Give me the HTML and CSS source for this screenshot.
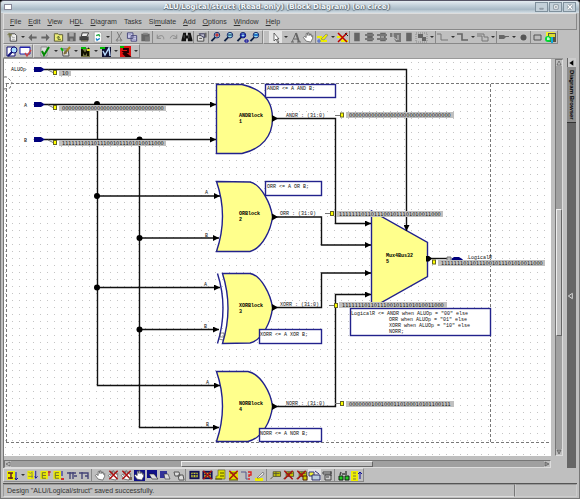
FILE: index.html
```
<!DOCTYPE html>
<html lang="en">
<head>
  <meta charset="UTF-8" />
  <title>ALU/Logical/struct</title>
  <link rel="stylesheet" href="styles.css">
</head>
<body>
  <div class="window">
    <header class="titlebar">
      <span class="app-icon"></span>
      <h1>ALU/Logical/struct (Read-only) (Block Diagram) (on circe)</h1>
      <div class="window-buttons">
        <button aria-label="Minimize"><svg viewBox="0 0 12 9"><path d="M4 6h4v1H4z" fill="#fff" stroke="#7d8b96"/></svg></button>
        <button aria-label="Maximize"><svg viewBox="0 0 12 9"><path d="M4 2h5v5H4zM6 4h1v1H6z" fill="#fff" stroke="#7d8b96"/></svg></button>
        <button aria-label="Close"><svg viewBox="0 0 12 9"><path d="M4 2l5 5M9 2l-5 5" stroke="#7d8b96" stroke-width="3"/><path d="M4 2l5 5M9 2l-5 5" stroke="#fff" stroke-width="1.4"/></svg></button>
      </div>
    </header>

    <nav class="menubar">
      <button><u>F</u>ile</button>
      <button><u>E</u>dit</button>
      <button><u>V</u>iew</button>
      <button>H<u>D</u>L</button>
      <button><u>D</u>iagram</button>
      <button>Tasks</button>
      <button>Si<u>m</u>ulate</button>
      <button><u>A</u>dd</button>
      <button><u>O</u>ptions</button>
      <button><u>W</u>indow</button>
      <button><u>H</u>elp</button>
    </nav>

    <div class="toolbar-row">
      <div class="toolbar standard">
        <button aria-label="New"><svg><use href="#new"/></svg></button>
        <button class="drop" aria-label="New options"></button>
        <button aria-label="Back"><svg><use href="#back"/></svg></button>
        <button aria-label="Forward"><svg><use href="#forward"/></svg></button>
        <button aria-label="Open"><svg><use href="#folder"/></svg></button>
        <button aria-label="Save"><svg><use href="#save"/></svg></button>
        <button aria-label="Print"><svg><use href="#print"/></svg></button>
        <button aria-label="Refresh"><svg><use href="#refresh"/></svg></button>
        <button class="drop" aria-label="Refresh options"></button>
        <span class="sep"></span>
        <button aria-label="Cut"><svg><use href="#cut"/></svg></button>
        <button aria-label="Copy"><svg><use href="#copy"/></svg></button>
        <button aria-label="Paste"><svg><use href="#paste"/></svg></button>
        <span class="sep"></span>
        <button aria-label="Undo"><svg><use href="#undo"/></svg></button>
        <button aria-label="Redo"><svg><use href="#redo"/></svg></button>
        <button aria-label="Find"><svg><use href="#find"/></svg></button>
        <span class="sep"></span>
        <button aria-label="Properties"><svg><use href="#props"/></svg></button>
        <span class="sep"></span>
        <button aria-label="Zoom in"><svg><use href="#lens"/><path d="M5 4h4M7 2v4" stroke="#c00"/></svg></button>
        <button aria-label="Zoom out"><svg><use href="#lens"/><path d="M5 4h4" stroke="#024"/></svg></button>
        <button aria-label="Zoom area"><svg><use href="#lens"/><path d="M5 3h4v3H5zM9 9h3v2H9z" fill="none" stroke="#009"/></svg></button>
        <button aria-label="Zoom to fit"><svg><use href="#lens"/><path d="M5 3h4v2H5z" fill="#27c"/></svg></button>
      </div>
      <div class="toolbar drawing">
        <button class="on" aria-label="Select"><svg><path d="M5 2v8l2-2 2 4 1-1-2-3h2z" fill="#fff" stroke="#333" stroke-width=".7"/></svg></button>
        <button class="drop" aria-label="Select options"></button>
        <button aria-label="Text"><svg><path d="M2 11h3M8 11h4M3 11l4-9 3 9M5 8h4" fill="none" stroke="#666"/><path d="M7 2l3 9" stroke="#666" stroke-width="2"/></svg></button>
        <button aria-label="Pan"><svg><use href="#hand"/></svg></button>
        <span class="sep"></span>
        <button aria-label="Add signal"><svg><path d="M1 6h4v4h6" fill="none" stroke="#ee0" stroke-width="2"/><path d="M5 8l5-5 2 1-4 5z" fill="#ee0" stroke="#777" stroke-width=".6"/><path d="M3 8v4M1 10h4" stroke="#46c"/></svg></button>
        <button class="drop" aria-label="Signal options"></button>
        <button aria-label="Delete signal"><svg><path d="M1 6h5v4h6" fill="none" stroke="#ee0" stroke-width="2"/><path d="M2 2l9 9M11 2l-9 9" stroke="#b00" stroke-width="1.5"/><path d="M9 2l3 3" stroke="#222"/></svg></button>
        <span class="sep"></span>
        <button aria-label="Block"><svg><use href="#block"/></svg></button>
        <button aria-label="Component"><svg><use href="#block"/><path d="M2 4h9M2 8h9" stroke="#777" stroke-width="2"/></svg></button>
        <button aria-label="Embedded block"><svg><use href="#block"/><path d="M1 4h10M1 8h10" stroke="#777" stroke-width="2"/><path d="M5 6h3" stroke="#ccc"/></svg></button>
        <button aria-label="Port map"><svg><path d="M1 2h11v9H7l-3-5H1z" fill="#777"/><path d="M4 2v4l4 3M9 4v5" fill="none" stroke="#ccc"/></svg></button>
        <button aria-label="Frame"><svg><use href="#block"/></svg></button>
        <button aria-label="Group"><svg><path d="M1 2h11v9H1z" fill="none" stroke="#888" stroke-dasharray="1 1"/><path d="M3 3h5v4H3zM7 6h4v4H7z" fill="#666"/></svg></button>
        <button class="drop" aria-label="Group options"></button>
        <span class="sep"></span>
        <button aria-label="Add wire"><svg><path d="M1 3h4v6h7" fill="none" stroke="#777"/></svg></button>
        <button class="drop" aria-label="Wire options"></button>
        <button aria-label="Add bus"><svg><path d="M1 3h5v6h6" fill="none" stroke="#666" stroke-width="1.6"/></svg></button>
        <button class="drop" aria-label="Bus options"></button>
        <button aria-label="Add bundle"><svg><path d="M1 3h7v3M1 5h5v5h6M8 6h4v4" fill="none" stroke="#777"/></svg></button>
        <button class="drop" aria-label="Bundle options"></button>
        <span class="sep"></span>
        <button aria-label="Add port"><svg><path d="M2 4h5l2 2-2 2H2zM8 5h4v1H8z" fill="#666"/></svg></button>
        <button class="drop" aria-label="Port options"></button>
        <button aria-label="Junction"><svg><circle cx="6.500" cy="6.500" r="3" fill="#555"/></svg></button>
        <span class="sep"></span>
        <button aria-label="Panel"><svg><path d="M3 4h7v5H3z" fill="#bbb" stroke="#555"/></svg></button>
        <button aria-label="Colours"><svg><path d="M2 1h9v4H2z" fill="#ee3"/><path d="M4 2h8v9H4z" fill="#554"/><path d="M5 3h6v3H5z" fill="#dd3"/><circle cx="4" cy="8" r="3" fill="#0d3"/><path d="M4 6v3M3 8h3" stroke="#fff"/><path d="M7 6h2v6H7z" fill="#1ad"/></svg></button>
      </div>
    </div>

    <div class="toolbar-row">
      <div class="toolbar">
        <button aria-label="View design"><svg><path d="M1 2h8v9H1z" fill="#fff" stroke="#117"/><circle cx="8" cy="5" r="3" fill="#adf" stroke="#117"/><path d="M6 7l-4 4" stroke="#117" stroke-width="2"/></svg></button>
        <button aria-label="Edit comment"><svg><path d="M1 2h10v7H1z" fill="#fff" stroke="#22a"/><path d="M1 2h10v1H1z" fill="#22a"/><path d="M6 8l2 3 4-6" fill="none" stroke="#c44" stroke-width="1.4"/></svg></button>
      </div>
      <div class="toolbar">
        <button aria-label="Check"><svg><path d="M2 2h6v9H2z" fill="#ddd" stroke="#666" stroke-width=".6"/><path d="M3 6l2 4 5-8" fill="none" stroke="#080" stroke-width="2"/></svg></button>
        <button class="drop" aria-label="Check options"></button>
        <button aria-label="Generate"><svg><path d="M3 4h6l1 7H4z" fill="#ddd" stroke="#555"/><path d="M5 9l6-7" stroke="#a82" stroke-width="2"/><path d="M2 3l2 3" stroke="#0b0" stroke-width="2"/><path d="M5 6h3M5 8h3" stroke="#555"/></svg></button>
        <button class="drop" aria-label="Generate options"></button>
        <button aria-label="Compile"><svg><path d="M2 3h9v9H2z" fill="#774"/><path d="M3 11V5l3 4 3-4v6" fill="none" stroke="#110" stroke-width="2"/><path d="M2 2h5v2H2z" fill="#0b0"/><path d="M8 4h3v2H8z" fill="#dd2"/></svg></button>
        <button class="drop" aria-label="Compile options"></button>
        <button aria-label="Simulate"><svg><path d="M3 2h9v10H3z" fill="#113"/><path d="M4 6l2 4 4-7 1 8" fill="none" stroke="#bdf" stroke-width="1.4"/><path d="M1 2h5v2H1z" fill="#0b0"/></svg></button>
        <button class="drop" aria-label="Simulate options"></button>
        <button aria-label="Synthesize"><svg><path d="M1 1h11v11H1z" fill="#d11"/><path d="M4 4h5v3H5l5 4H7L4 8" fill="none" stroke="#200" stroke-width="1.8"/><path d="M1 1h4v2H1z" fill="#0b0"/></svg></button>
        <button class="drop" aria-label="Synthesize options"></button>
      </div>
    </div>

    <main class="workspace">
      <div class="editor">
        <div class="canvas">
          <svg class="diagram" width="548" height="396" viewBox="4 59 548 396">
            <defs>
              <pattern id="dots" x="5" y="62" width="7" height="7" patternUnits="userSpaceOnUse">
                <rect width="1" height="1" fill="#c4c4c4"/>
              </pattern>
              <marker id="arrow" viewBox="0 0 6 6" markerWidth="6" markerHeight="6" refX="6" refY="3" orient="auto" markerUnits="userSpaceOnUse">
                <path d="M0 0L6 3 0 6z"/>
              </marker>
            </defs>
            <rect x="4" y="59" width="548" height="396" fill="url(#dots)"/>

            <!-- page boundary -->
            <g class="boundary">
              <path d="M6.500 84V442M6 83.500H552M6 442.500H552M490.500 84V442"/>
              <path d="M4 77h3l5 5M4 89l6-1 2-6"/>
            </g>

            <!-- gates -->
            <g class="shape">
              <path d="M216.500 84.500H242C262 89 272.500 101 272.500 118.500S262 149 242 153.500H216.500z"/>
              <path d="M216.500 181.500L250 182C261 184 271 204 272.500 217C271 229 263 248 250 251.500H216.500Q228.500 216 216.500 181.500z"/>
              <path d="M222.500 273.500H250C261 275 271 295 272.500 308C271 321 263 340 250 343L222.500 343.500Q233.500 308 222.500 273.500z"/>
              <path d="M217.500 273.500Q228.500 308 217.500 343.500" fill="none"/>
              <path d="M216.500 371.500H248C261 374 271 393 272.500 406.500C271 420 263 438 248 441.500H216.500Q228.500 406 216.500 371.500z"/>
              <path d="M371.500 211V308L427.500 276.500V242.500z"/>
            </g>

            <!-- wires -->
            <g class="wire">
              <path d="M44 69.500H406.500V231" marker-end="url(#arrow)"/>
              <path d="M44 104.500H216" marker-end="url(#arrow)"/>
              <path d="M44 139.500H216" marker-end="url(#arrow)"/>
              <path d="M97.500 104V385.500H220" marker-end="url(#arrow)"/>
              <path d="M97.500 196H220" marker-end="url(#arrow)"/>
              <path d="M97.500 287.500H220" marker-end="url(#arrow)"/>
              <path d="M139.500 139V427.500H219" marker-end="url(#arrow)"/>
              <path d="M139.500 238H219" marker-end="url(#arrow)"/>
              <path d="M139.500 329.500H219" marker-end="url(#arrow)"/>
              <path d="M273 118.500H335.500V223.500H371" marker-end="url(#arrow)"/>
              <path d="M273 217H321.500V245H371" marker-end="url(#arrow)"/>
              <path d="M273 307.500H321.500V273H371" marker-end="url(#arrow)"/>
              <path d="M273 406.500H335.500V294.500H371" marker-end="url(#arrow)"/>
              <path d="M428 258.500H448"/>
            </g>
            <g>
              <circle cx="97" cy="104" r="3"/>
              <circle cx="139.500" cy="139.500" r="3"/>
              <circle cx="97" cy="196" r="3"/>
              <circle cx="97" cy="287.500" r="3"/>
              <circle cx="139.500" cy="238" r="3"/>
              <circle cx="139.500" cy="329.500" r="3"/>
              <path d="M272 115l6 3.500-6 3.500zM272 213.500l6 3.500-6 3.500zM272 304l6 3.500-6 3.500zM272 403l6 3.500-6 3.500z"/>
              <path d="M426 256h3l3 2.500-3 3h-3z"/>
              <path d="M220 333h4v4h-4zM219 339l4 1" fill="none" stroke="#333" stroke-width=".6"/>
            </g>

            <!-- ports -->
            <g class="port">
              <path d="M34 67h7l4 2.500-4 2.500h-7z"/>
              <path d="M34 102h7l4 2.500-4 2.500h-7z"/>
              <path d="M34 137h7l4 2.500-4 2.500h-7z"/>
              <path d="M451 259l3-2h5l4 2.500-4 2.500h-5z"/>
              <path d="M447 257h4v4h-4z" fill="#bbb" stroke="#777"/>
            </g>

            <!-- comments -->
            <g class="note">
              <rect x="265.500" y="84.500" width="70" height="13"/>
              <rect x="265.500" y="181.500" width="56" height="14"/>
              <rect x="259.500" y="329.500" width="62" height="14"/>
              <rect x="259.500" y="428.500" width="62" height="13"/>
              <rect x="350.500" y="308.500" width="140" height="27"/>
            </g>
            <g class="code">
              <text x="267" y="90">ANDR &lt;= A AND B;</text>
              <text x="267" y="188">ORR &lt;= A OR B;</text>
              <text x="260" y="336">XORR &lt;= A XOR B;</text>
              <text x="260" y="435">NORR &lt;= A NOR B;</text>
              <text x="351" y="315">LogicalR &lt;= ANDR when ALUOp = "00" else</text>
              <text x="389" y="321">ORR when ALUOp = "01" else</text>
              <text x="389" y="327">XORR when ALUOp = "10" else</text>
              <text x="389" y="333">NORR;</text>
              <text x="11" y="71">ALUOp</text>
              <text x="24" y="107">A</text>
              <text x="24" y="142">B</text>
              <text x="205" y="194">A</text>
              <text x="205" y="237">B</text>
              <text x="204" y="286">A</text>
              <text x="204" y="328">B</text>
              <text x="206" y="384">A</text>
              <text x="206" y="426">B</text>
              <text x="286" y="117">ANDR : (31:0)</text>
              <text x="280" y="215">ORR : (31:0)</text>
              <text x="280" y="306">XORR : (31:0)</text>
              <text x="286" y="405">NORR : (31:0)</text>
              <text x="468" y="259">LogicalR</text>
            </g>
            <g class="code name">
              <text x="239" y="117">ANDBlock</text><text x="239" y="123">1</text>
              <text x="239" y="215">ORBlock</text><text x="239" y="221">2</text>
              <text x="239" y="307">XORBlock</text><text x="239" y="313">3</text>
              <text x="239" y="405">NORBlock</text><text x="239" y="411">4</text>
              <text x="386" y="257">Mux4Bus32</text><text x="386" y="263">5</text>
            </g>

            <!-- probe values -->
            <g class="probe">
              <path d="M48 70l6 3M48 105l6 3M48 140l6 3M335 115.500h6M325 213.500h6M329 305.500h6M335 403.500h6"/>
              <rect class="tag" x="53.500" y="70.500" width="3" height="4"/>
              <rect class="tag" x="53.500" y="105.500" width="3" height="4"/>
              <rect class="tag" x="53.500" y="140.500" width="3" height="4"/>
              <rect class="tag" x="340.500" y="113" width="3" height="4"/>
              <rect class="tag" x="330.500" y="211.500" width="3" height="4"/>
              <rect class="tag" x="334.500" y="303.500" width="3" height="4"/>
              <rect class="tag" x="340.500" y="401.500" width="3" height="4"/>
              <rect class="tag" x="432.500" y="260" width="3" height="4"/>
              <rect x="59" y="70" width="12" height="6"/>
              <rect x="59" y="105" width="107" height="6"/>
              <rect x="59" y="140" width="107" height="6"/>
              <rect x="346" y="112" width="108" height="6"/>
              <rect x="336" y="211" width="107" height="6"/>
              <rect x="339" y="302" width="108" height="6"/>
              <rect x="346" y="401" width="108" height="6"/>
              <rect x="438" y="260" width="107" height="6"/>
              <text x="62" y="75">10</text>
              <text x="62" y="110">00000000000000000000000000000000</text>
              <text x="62" y="145">11111110110111001011101010011000</text>
              <text x="349" y="117">00000000000000000000000000000000</text>
              <text x="339" y="216">11111110110111001011101010011000</text>
              <text x="342" y="307">11111110110111001011101010011000</text>
              <text x="349" y="406">00000001001000110100010101100111</text>
              <text x="441" y="265">11111110110111001011101010011000</text>
            </g>
          </svg>
        </div>
        <div class="vscroll">
          <button aria-label="Scroll up"><svg viewBox="0 0 6 6"><path d="M3 1l2 4H1z" fill="#ccc" stroke="#555" stroke-width=".7"/></svg></button>
          <div class="track"><div class="thumb"></div></div>
          <button aria-label="Scroll down"><svg viewBox="0 0 6 6"><path d="M1 1h4L3 5z" fill="#999" stroke="#555" stroke-width=".7"/></svg></button>
        </div>
        <div class="hscroll">
          <button aria-label="Scroll left"><svg viewBox="0 0 6 6"><path d="M1 3l4-2v4z" fill="#ccc" stroke="#555" stroke-width=".7"/></svg></button>
          <div class="track"><div class="thumb"></div></div>
          <button aria-label="Scroll right"><svg viewBox="0 0 6 6"><path d="M5 3L1 1v4z" fill="#999" stroke="#555" stroke-width=".7"/></svg></button>
        </div>
      </div>
      <aside class="browser">
        <button class="expand" aria-label="Expand browser"><svg viewBox="0 0 6 6"><path d="M1 3l3-2v4z"/></svg></button>
        <button class="tab">Diagram Browser</button>
        <div class="splitter"><svg viewBox="0 0 6 6"><path d="M1 3l3-2v4z" fill="none" stroke="#ddd" stroke-width=".7"/></svg></div>
      </aside>
    </main>

    <div class="toolbar-row">
      <div class="toolbar debug">
        <button aria-label="Run"><svg><path d="M1 2h8v9H1z" fill="#ee0"/><path d="M2 4h5M2 9h5M5 4v6" stroke="#622" stroke-width="1.5"/><path d="M10 3v7M9 9l1 2 2-2" fill="none" stroke="#119"/></svg></button>
        <button class="drop" aria-label="Run options"></button>
        <button aria-label="Step"><svg><use href="#step"/></svg></button>
        <button aria-label="Step over"><svg><use href="#step2"/><path d="M10 2v5M9 3h3" stroke="#c11"/></svg></button>
        <button aria-label="Step out"><svg><use href="#step2"/><path d="M10 2v5" stroke="#119"/><path d="M9 9h3v2H9z" fill="#c33"/></svg></button>
        <button aria-label="Step back"><svg><path d="M2 4h9M5 3v7M8 3v7M9 7h3" fill="none" stroke="#447" stroke-width="1.4"/></svg></button>
        <button aria-label="Restart"><svg><path d="M1 4h9v6M4 3v7M7 7h3" fill="none" stroke="#447" stroke-width="1.4"/></svg></button>
        <span class="sep"></span>
        <button aria-label="Breakpoint"><svg><use href="#hand"/></svg></button>
        <button aria-label="Delete breakpoint"><svg><use href="#hand"/><use href="#cross"/></svg></button>
        <button aria-label="Delete all breakpoints"><svg><use href="#hand"/><use href="#cross"/><path d="M9 8h3v3H9z" fill="#765"/></svg></button>
        <button aria-label="Enable breakpoint"><svg><path d="M1 1h11v11H1z" fill="#118"/><use href="#hand"/></svg></button>
        <button aria-label="Enable all"><svg><path d="M1 1h10v8H1z" fill="#118"/><path d="M3 5h5l4 5H6z" fill="#ddd" stroke="#222" stroke-width=".6"/></svg></button>
        <button aria-label="Disable"><svg><path d="M1 2h7v7H1z" fill="#339"/><path d="M5 5h4l2 5H6z" fill="#ddd" stroke="#333" stroke-width=".6"/></svg></button>
        <button aria-label="Disable all"><svg><path d="M2 3h5l1 4H3zM6 6h5l1 5H7z" fill="#ddd" stroke="#555"/></svg></button>
        <span class="sep"></span>
        <button aria-label="Watch"><svg><use href="#chip"/></svg></button>
        <button aria-label="Remove watch"><svg><use href="#chip"/><use href="#cross"/></svg></button>
        <button aria-label="Force"><svg><path d="M4 1h7v9H2V7h2z" fill="#dd0" stroke="#663" stroke-width=".7"/><path d="M6 4h4M6 7h4M1 10h7" stroke="#550"/></svg></button>
        <button aria-label="Unforce"><svg><path d="M2 2h9v9H2z" fill="#dd0"/><path d="M2 11h9M3 4h7" stroke="#550"/><use href="#cross"/></svg></button>
        <button aria-label="Trace"><svg><path d="M1 3h5v7h2" fill="none" stroke="#558"/><path d="M8 3h3v3H9v2M9 9v2" fill="none" stroke="#d22" stroke-width="1.4"/></svg></button>
        <button aria-label="Highlight"><svg><path d="M2 9h8v3H2z" fill="#ee0"/><path d="M4 9l6-6 1 2-5 4z" fill="#eee" stroke="#555" stroke-width=".6"/></svg></button>
        <span class="sep"></span>
        <button aria-label="Add probe"><svg><use href="#probe"/></svg></button>
        <button aria-label="Delete probe"><svg><use href="#probe"/><use href="#cross"/></svg></button>
        <button aria-label="Delete all probes"><svg><use href="#probe"/><use href="#cross"/><path d="M8 7h4v4H8z" fill="#cc0" stroke="#520"/></svg></button>
        <button class="on" aria-label="Show probes"><svg><path d="M1 3h5v4H1z" fill="#ee3" stroke="#338"/><path d="M4 6h8v5H4z" fill="#bcd" stroke="#336"/><path d="M7 2l4 3" stroke="#337"/></svg></button>
        <button aria-label="Probe properties"><svg><path d="M2 3h8v2H2zM4 6h6v5H4zM10 2v5M5 8h3" fill="#ccc" stroke="#444"/></svg></button>
        <span class="sep"></span>
        <button aria-label="Compare"><svg><path d="M2 7h4v4H2zM8 7h4v4H8z" fill="#2c2" stroke="#121"/><path d="M3 6l1-3M9 6V2M5 5h3" stroke="#444" stroke-width="1.5"/></svg></button>
        <button aria-label="Flow"><svg><path d="M1 2h7v10H1z" fill="#ee0"/><path d="M3 4h3M3 7h3M3 10h3" stroke="#774"/><path d="M10 3v7M8 5l2-2 2 2" fill="none" stroke="#119"/></svg></button>
      </div>
    </div>

    <footer class="statusbar">
      <span class="message">Design "ALU/Logical/struct" saved successfully.</span>
      <span class="panel"></span>
    </footer>
  </div>

  <svg class="sprites" aria-hidden="true">
    <symbol id="new" viewBox="0 0 13 13"><path d="M4 3h5l2 2v6H4z" fill="#eee" stroke="#444"/><path d="M1 4h5M3 2v5M2 2l4 4" stroke="#774" stroke-width="1"/><path d="M6 7h3M6 9h3" stroke="#aaa"/></symbol>
    <symbol id="back" viewBox="0 0 13 13"><path d="M2 7l4-4v3h5v2H6v3z" fill="#666"/></symbol>
    <symbol id="forward" viewBox="0 0 13 13"><path d="M11 7L7 3v3H2v2h5v3z" fill="#666"/></symbol>
    <symbol id="folder" viewBox="0 0 13 13"><path d="M2 4V3h4l1 1h4v7H2z" fill="#ee7" stroke="#553"/><path d="M6 9V6M5 7l1-1 2 1M6 9h3" fill="none" stroke="#452"/></symbol>
    <symbol id="save" viewBox="0 0 13 13"><path d="M2 2h9v9H2z" fill="#666"/><path d="M4 2h5v4H4z" fill="#aaa"/><path d="M5 8h3v3H5z" fill="#999"/></symbol>
    <symbol id="print" viewBox="0 0 13 13"><path d="M4 2h7l-2 4H3z" fill="#eee" stroke="#333"/><path d="M1 6h10v4H1z" fill="#444"/><path d="M3 10h7v1H3z" fill="#bb7" stroke="#222" stroke-width=".5"/></symbol>
    <symbol id="refresh" viewBox="0 0 13 13"><path d="M3 1h6l2 2v9H3z" fill="#fff" stroke="#999" stroke-width=".7"/><path d="M5 5l3-1 1 2" fill="none" stroke="#2a4" stroke-width="1.5"/><path d="M9 8l-3 2-1-2" fill="none" stroke="#28c" stroke-width="1.5"/></symbol>
    <symbol id="cut" viewBox="0 0 13 13"><path d="M4 1l4 8M9 1L4 9" stroke="#777"/><circle cx="4" cy="10" r="1" fill="none" stroke="#777"/><circle cx="8" cy="10" r="1" fill="none" stroke="#777"/></symbol>
    <symbol id="copy" viewBox="0 0 13 13"><path d="M1 2h6v6H1zM5 5h6v6H5z" fill="#cce" stroke="#447"/><path d="M6 7h4M6 9h4M2 4h3" stroke="#779" stroke-width=".6"/></symbol>
    <symbol id="paste" viewBox="0 0 13 13"><path d="M2 3h9v8H2z" fill="#666"/><path d="M4 2h5v2H4z" fill="#888"/><path d="M6 6h5v5H6z" fill="#777"/></symbol>
    <symbol id="undo" viewBox="0 0 13 13"><path d="M3 4v4h4M3 8c2-4 7-4 7 0v1" fill="none" stroke="#888"/></symbol>
    <symbol id="redo" viewBox="0 0 13 13"><path d="M10 4v4H6M10 8c-2-4-6-4-7 0" fill="none" stroke="#888"/></symbol>
    <symbol id="find" viewBox="0 0 13 13"><path d="M3 2h3v3h2V2h3l2 8v1H8V8H6v3H1v-1z" fill="#111"/><path d="M4 4v4M9 4v4" stroke="#888" stroke-width=".6"/></symbol>
    <symbol id="props" viewBox="0 0 13 13"><path d="M2 5h7v6H2z" fill="#ddd" stroke="#444"/><path d="M4 3h6v4L7 6z" fill="#bbc" stroke="#335"/><path d="M4 8h3" stroke="#444"/><path d="M10 2h2v5h-2z" fill="#666"/></symbol>
    <symbol id="lens" viewBox="0 0 13 13"><circle cx="7" cy="4.500" r="3" fill="#9de" stroke="#126"/><path d="M5 7l-4 4" stroke="#124" stroke-width="2"/></symbol>
    <symbol id="hand" viewBox="0 0 13 13"><path d="M4 11L1 7l1-1 2 1V3l1-1 1 3V2h1l1 3 1-2 1 3 1-1v3l-2 4z" fill="#fff" stroke="#444" stroke-width=".7"/></symbol>
    <symbol id="block" viewBox="0 0 13 13"><path d="M4 2h6v9H4z" fill="#666"/></symbol>
    <symbol id="cross" viewBox="0 0 13 13"><path d="M2 2l9 9M11 2l-9 9" stroke="#a11" stroke-width="1.6"/></symbol>
    <symbol id="chip" viewBox="0 0 13 13"><path d="M1 2h11v9H1z" fill="#115"/><path d="M3 4h7v5H3z" fill="#cc3"/><path d="M3 6h7M5 4v5M8 4v5" stroke="#115"/></symbol>
    <symbol id="probe" viewBox="0 0 13 13"><path d="M4 3h8v5H4z" fill="#cc0" stroke="#553"/><path d="M4 5h7M7 3v5M4 8l-3 3" stroke="#553"/></symbol>
    <symbol id="step" viewBox="0 0 13 13"><path d="M1 2h7v9H1z" fill="#ee0"/><path d="M2 3l2 2 2-2v7M2 8h5" fill="none" stroke="#885"/><path d="M10 2v8M9 8l1 2 2-2" fill="none" stroke="#119"/></symbol>
    <symbol id="step2" viewBox="0 0 13 13"><path d="M1 2h8v9H1z" fill="#ee0"/><path d="M3 4v6M3 4h4M3 7h4M3 10h4" fill="none" stroke="#663"/></symbol>
  </svg>
</body>
</html>
```
FILE: styles.css
```
* {
  box-sizing: border-box;
}
body {
  margin: 0;
  background-color: #000;
  font-family: "Liberation Sans", Arial, sans-serif;
  font-size: 7px;
  color: #333;
}
button {
  font: inherit;
  color: inherit;
  background: none;
  border: 0;
  padding: 0;
}
svg {
  display: block;
}
.sprites {
  display: none;
}
.window {
  display: flex;
  flex-direction: column;
  height: 100vh;
  background-color: #bfbfbf;
  border: 1px solid #777;
  border-top-color: #556;
  border-radius: 4px 4px 0 0;
  overflow: hidden;
}

/* title bar */
.titlebar {
  display: flex;
  align-items: center;
  height: 12px;
  padding: 0 3px;
  background: linear-gradient(#e4ecf1, #c0ced8 40%, #a9bac6 70%, #d6e0e6);
}
.titlebar h1 {
  flex: 1;
  margin: 0;
  padding-left: 6px;
  text-align: center;
  font-family: "DejaVu Sans", sans-serif;
  font-size: 7px;
  line-height: 10px;
  color: #f4f8fa;
  text-shadow: 1px 0 1px #536371, 0 1px 1px #536371;
  white-space: nowrap;
}
.app-icon {
  width: 8px;
  height: 6px;
  background-color: #fff;
  border: 1px solid #889;
}
.window-buttons {
  display: flex;
  gap: 1px;
}
.window-buttons button {
  width: 13px;
  height: 10px;
  border: 1px solid #7f909c;
  background-color: #c3d0d9;
}
.window-buttons svg {
  width: 11px;
  height: 8px;
}

/* menus */
.menubar {
  display: flex;
  gap: 7px;
  height: 17px;
  margin: 0 2px;
  padding: 0 6px;
  border: 1px solid #ddd;
  border-right-color: #888;
  border-bottom-color: #888;
  align-items: center;
}

/* toolbars */
.toolbar-row {
  display: flex;
  height: 14px;
  margin: 0 2px;
  flex: none;
}
.toolbar {
  display: flex;
  border: 1px solid #ddd;
  border-right-color: #888;
  border-bottom-color: #888;
  padding-left: 2px;
}
.toolbar + .toolbar {
  padding-left: 5px;
}
.toolbar button {
  width: 13px;
  height: 12px;
}
.toolbar svg {
  width: 13px;
  height: 12px;
}
.toolbar .drop {
  display: grid;
  place-items: center;
  width: 7px;
}
.drop::after {
  content: "";
  border: 2px solid transparent;
  border-top: 2px solid #333;
  border-bottom: 0;
}
.toolbar .on {
  background-color: #e4e4e4;
}
.sep {
  width: 1px;
  border-left: 1px solid #888;
}
.standard .sep {
  width: 2px;
}
.debug .sep {
  width: 3px;
}

/* editor */
.workspace {
  flex: 1;
  display: flex;
  min-height: 0;
  padding: 0 3px 0 2px;
}
.editor {
  flex: 1;
  display: grid;
  grid-template-columns: 1fr 8px;
  grid-template-rows: 1fr 8px;
  gap: 4px;
  min-width: 0;
  border-left: 1px solid #777;
  border-top: 1px solid #999;
}
.canvas {
  overflow: hidden;
  background-color: #fff;
}
.vscroll,
.hscroll {
  display: flex;
  background-color: #a0a0a0;
  border: 1px solid #777;
  border-right-color: #ddd;
  border-bottom-color: #ddd;
}
.vscroll {
  flex-direction: column;
}
.vscroll svg,
.hscroll svg {
  width: 6px;
  height: 6px;
}
.track {
  flex: 1;
  display: flex;
}
.vscroll .track {
  flex-direction: column;
  padding-top: 143px;
}
.hscroll .track {
  padding-left: 170px;
}
.thumb {
  background-color: #bfbfbf;
  border: 1px solid #eee;
  border-right-color: #666;
  border-bottom-color: #666;
}
.vscroll .thumb {
  height: 53%;
}
.hscroll .thumb {
  width: 53%;
}
.vscroll button,
.hscroll button {
  background-color: #bfbfbf;
}

/* side panel */
.browser {
  display: flex;
  flex-direction: column;
  width: 9px;
  margin-left: 4px;
  background-color: #666;
}
.expand {
  align-self: center;
  width: 8px;
  height: 9px;
  background-color: #ccc;
}
.expand svg,
.splitter svg {
  width: 8px;
  height: 8px;
}
.tab {
  height: 56px;
  background-color: #8c8c8c;
  border-bottom: 1px solid #333;
  writing-mode: vertical-rl;
  color: #000;
  font-size: 6px;
  font-weight: bold;
  line-height: 9px;
  white-space: nowrap;
}
.splitter {
  flex: 1;
  display: flex;
  align-items: center;
}

/* status bar */
.statusbar {
  display: flex;
  flex: none;
  height: 14px;
  margin: 1px 2px 1px;
  border-top: 1px solid #555;
  line-height: 12px;
}
.message {
  flex: 1;
  padding-left: 3px;
  border: 1px solid #999;
  border-right-color: #777;
  border-bottom-color: #ddd;
}
.panel {
  width: 62px;
  border: 1px solid #ccc;
  border-top-color: #999;
}

/* diagram */
.boundary {
  fill: none;
  stroke: #777;
  stroke-dasharray: 3 2;
}
.shape {
  fill: #ffff8c;
  stroke: #22228c;
  stroke-width: 1.4;
}
.wire {
  fill: none;
  stroke: #111;
  stroke-width: 1.4;
}
.port {
  fill: #00007c;
}
.note {
  fill: #fff;
  stroke: #22228c;
  stroke-width: 1.4;
}
.code {
  font-family: "Liberation Mono", monospace;
  font-size: 5px;
  fill: #111;
}
.name {
  font-weight: bold;
  fill: #000;
}
.probe {
  font-family: "DejaVu Sans", sans-serif;
  font-size: 5px;
}
.probe path {
  stroke: #777;
}
.probe rect {
  fill: #c0c0c0;
}
.probe .tag {
  fill: #ff0;
  stroke: #662;
}
.probe text {
  fill: #111;
}
```
